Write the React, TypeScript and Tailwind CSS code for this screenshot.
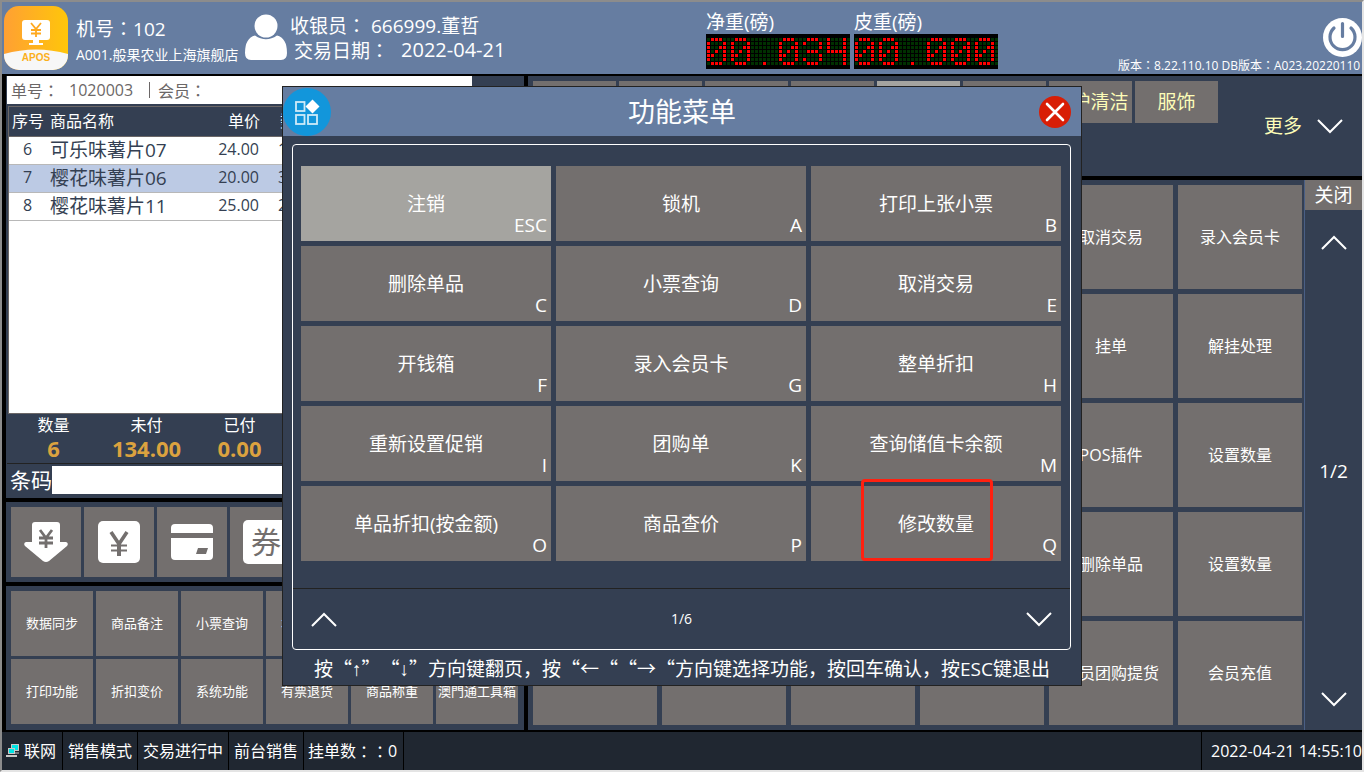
import type { ReactNode } from 'react'

const tabs = ['', '', '', '', '', '', '洗护清洁', '服饰']

const rows = [
    { no: 6, name: '可乐味薯片07', price: '24.00', qty: '1' },
    { no: 7, name: '樱花味薯片06', price: '20.00', qty: '3' },
    { no: 8, name: '樱花味薯片11', price: '25.00', qty: '2' },
]

const totals = [
    { label: '数量', value: '6' },
    { label: '未付', value: '134.00' },
    { label: '已付', value: '0.00' },
]

const shortcuts = [
    '数据同步', '商品备注', '小票查询', '本机设置', '', '',
    '打印功能', '折扣变价', '系统功能', '有票退货', '商品称重', '澳門通工具箱',
]

const functionRows = [
    ['取消交易', '录入会员卡'],
    ['挂单', '解挂处理'],
    ['POS插件', '设置数量'],
    ['删除单品', '设置数量'],
    ['会员团购提货', '会员充值'],
]

const menuItems = [
    { label: '注销', hotkey: 'ESC' },
    { label: '锁机', hotkey: 'A' },
    { label: '打印上张小票', hotkey: 'B' },
    { label: '删除单品', hotkey: 'C' },
    { label: '小票查询', hotkey: 'D' },
    { label: '取消交易', hotkey: 'E' },
    { label: '开钱箱', hotkey: 'F' },
    { label: '录入会员卡', hotkey: 'G' },
    { label: '整单折扣', hotkey: 'H' },
    { label: '重新设置促销', hotkey: 'I' },
    { label: '团购单', hotkey: 'K' },
    { label: '查询储值卡余额', hotkey: 'M' },
    { label: '单品折扣(按金额)', hotkey: 'O' },
    { label: '商品查价', hotkey: 'P' },
    { label: '修改数量', hotkey: 'Q' },
]

// 5x7 dot patterns for the scale readout
const glyphs: Record<string, string[]> = {
    '0': ['.XXX.', 'X...X', 'X..XX', 'X.X.X', 'XX..X', 'X...X', '.XXX.'],
    '3': ['.XXX.', 'X...X', '....X', '.XXX.', '....X', 'X...X', '.XXX.'],
    '4': ['X...X', 'X...X', 'X...X', 'XXXXX', '....X', '....X', '....X'],
    '.': ['.....', '.....', '.....', '.....', '.....', '.....', '..X..'],
}

function LedDisplay({ value }: { value: string }) {
    const dots = []
    for (let row = 0; row < 7; row++) {
        for (let col = 0; col < 36; col++) {
            const lit = glyphs[value[Math.floor(col / 6)]]?.[row][col % 6] === 'X'
            dots.push(
                <rect key={`${row}-${col}`} x={1 + col * 4} y={4 + row * 4} width="3" height="3" fill={lit ? '#ff0000' : '#003000'} />
            )
        }
    }
    return (
        <svg width="144" height="35" viewBox="0 0 144 35" shapeRendering="crispEdges" role="img" aria-label={value}>
            <rect width="144" height="35" fill="#000" />
            {dots}
        </svg>
    )
}

// Traditional Chinese fonts centre the full-width colon in its cell
function Colon() {
    return <span lang="zh-TW" className="font-['Noto_Sans_CJK_TC',sans-serif]">：</span>
}

function Chevron({ up = false }: { up?: boolean }) {
    return (
        <svg width="26" height="15" viewBox="0 0 26 15" fill="none" stroke="#fff" strokeWidth="2">
            <path d={up ? 'M1 14 13 2l12 12' : 'M1 1l12 12L25 1'} />
        </svg>
    )
}

function Logo() {
    return (
        <svg width="64" height="64" viewBox="0 0 64 64" className="shrink-0">
            <defs>
                <linearGradient id="logo-fill">
                    <stop offset="0" stopColor="#ffa033" />
                    <stop offset="1" stopColor="#ffc60a" />
                </linearGradient>
                <clipPath id="logo-clip">
                    <rect width="64" height="64" rx="15" />
                </clipPath>
            </defs>
            <g clipPath="url(#logo-clip)">
                <rect width="64" height="64" fill="url(#logo-fill)" />
                <path d="M0 48Q32 39 64 48V64H0Z" fill="#f7f7f7" />
            </g>
            <rect x="18" y="14" width="28" height="20" rx="3" fill="#fff" />
            <path d="M29 34h6v3h4v2H25v-2h4z" fill="#fff" />
            <path d="M27 17l5 6 5-6M27 24h10M27 27.500h10M32 23v8" fill="none" stroke="#ffa91f" strokeWidth="1.800" />
            <text x="32" y="55" textAnchor="middle" fontSize="10" fontWeight="700" fill="#fbb01c" fontFamily="Liberation Sans, sans-serif">APOS</text>
        </svg>
    )
}

function PersonIcon() {
    return (
        <svg width="42" height="46" viewBox="0 0 42 46" fill="#fff" className="shrink-0">
            <circle cx="21" cy="12" r="11.500" />
            <path d="M10 21.500Q21 29 32 21.500Q42 24 42 39Q42 46 36 46H6Q0 46 0 39Q0 24 10 21.500Z" />
        </svg>
    )
}

function PowerIcon() {
    return (
        <svg width="39" height="39" viewBox="0 0 39 39">
            <circle cx="19.500" cy="19.500" r="19.500" fill="#fff" />
            <path d="M11 10a12.500 12.500 0 1 0 17 0M19.500 5.500v13" fill="none" stroke="#667da1" strokeWidth="3.200" strokeLinecap="round" />
        </svg>
    )
}

function PayButton({ label, children }: { label: string; children: ReactNode }) {
    return (
        <button aria-label={label} className="flex size-[70px] shrink-0 items-center justify-center bg-[#736f6e]">
            <svg width="44" height="44" viewBox="0 0 44 44">{children}</svg>
        </button>
    )
}

function Header() {
    return (
        <header className="flex h-[74px] shrink-0 items-start border-b-2 border-black bg-[#667da1] text-white">
            <div className="flex pt-1 pl-0.5">
                <Logo />
            </div>
            <div className="w-[177px] shrink-0 pt-3 pl-2 whitespace-nowrap">
                <div className="text-[19px] leading-7">机号<Colon />102</div>
                <div className="text-sm leading-6">A001.般果农业上海旗舰店</div>
            </div>
            <div className="pt-3">
                <PersonIcon />
            </div>
            <div className="w-[419px] shrink-0 pt-[11px] pl-[3px] text-[19px] leading-6 whitespace-nowrap">
                <div>收银员<Colon /> 666999.董哲</div>
                <div className="flex gap-3 pl-1">
                    <span>交易日期<Colon /></span>
                    <span className="text-xl leading-6">2022-04-21</span>
                </div>
            </div>
            <div className="flex shrink-0 gap-1 pt-2 text-[19px] leading-6">
                <div className="flex flex-col">
                    净重(磅)
                    <LedDisplay value="00.034" />
                </div>
                <div className="flex flex-col">
                    皮重(磅)
                    <LedDisplay value="00.000" />
                </div>
            </div>
            <div className="ml-auto flex w-[244px] shrink-0 flex-col items-end overflow-hidden pt-4">
                <button aria-label="退出系统">
                    <PowerIcon />
                </button>
                <div className="w-full text-xs leading-4 whitespace-nowrap">版本<Colon />8.22.110.10 DB版本<Colon />A023.20220110</div>
            </div>
        </header>
    )
}

function OrderPanel() {
    return (
        <section className="flex flex-1 flex-col bg-[#343f52]">
            <div className="mr-[52px] ml-px flex h-7 items-center bg-white px-1 text-base text-[#6b6767]">
                <span>单号<Colon /></span>
                <span className="ml-2.5">1020003</span>
                <span className="ml-4 h-4 border-l border-[#6b6767]" />
                <span className="ml-2">会员<Colon /></span>
            </div>
            <div className="mt-0.5 mr-1 ml-0.5 flex-1 border border-[#6b6767] bg-white">
                <table className="w-full table-fixed text-left text-[#343f52]">
                    <thead className="h-[29px] border-b border-[#6b6767] bg-[#343f52] text-base text-white">
                        <tr>
                            <th className="w-[41px] pl-[3px] font-normal">序号</th>
                            <th className="w-[150px] font-normal">商品名称</th>
                            <th className="w-[60px] text-right font-normal">单价</th>
                            <th className="pl-5 font-normal">数量</th>
                        </tr>
                    </thead>
                    <tbody>
                        {rows.map((row) => (
                            <tr key={row.no} className={`h-7 border-b border-[#b8b8b8] ${row.no === 7 ? 'bg-[#bccae4]' : 'bg-white'}`}>
                                <td className="pr-1 text-center align-top text-base leading-6">{row.no}</td>
                                <td className="text-[19px] leading-5 whitespace-nowrap">{row.name}</td>
                                <td className="pr-px text-right align-top text-base leading-6">{row.price}</td>
                                <td className="pl-[18px] align-top text-base leading-6">{row.qty}</td>
                            </tr>
                        ))}
                    </tbody>
                </table>
            </div>
            <div className="ml-px flex h-[50px] items-start border-b border-[#222] text-center text-white">
                {totals.map((total) => (
                    <div key={total.label} className="w-[93px]">
                        <div className="text-base leading-[22px]">{total.label}</div>
                        <div className="text-[22px] leading-6 font-bold text-[#dba23f]">{total.value}</div>
                    </div>
                ))}
            </div>
            <div className="flex h-[34px] items-start px-1 pt-0.5">
                <label htmlFor="barcode" className="text-[21px] leading-7 text-white">条码</label>
                <input id="barcode" className="h-7 min-w-0 flex-1 bg-white px-1 outline-none" />
            </div>
        </section>
    )
}

function PayPanel() {
    return (
        <section className="flex h-20 gap-[3px] overflow-hidden bg-[#343f52] p-[5px]">
            <PayButton label="现金">
                <path d="M11 2h22q3 0 3 3v17h6q3 1 1 4L25 41q-3 2-6 0L1 26q-2-3 1-4h6V5q0-3 3-3z" fill="#fff" />
                <path d="M16 10l6 8 6-8M15 18h14M15 23h14M22 17v11" fill="none" stroke="#736f6e" strokeWidth="2.800" />
            </PayButton>
            <PayButton label="人民币">
                <rect x="1" y="1" width="42" height="42" rx="5" fill="#fff" />
                <path d="M14 12l8 12 8-12" fill="none" stroke="#736f6e" strokeWidth="3.600" />
                <path d="M14 25.500h16M14 30.500h16" stroke="#736f6e" strokeWidth="2" />
                <path d="M22 23v13" stroke="#736f6e" strokeWidth="4" />
            </PayButton>
            <PayButton label="银行卡">
                <path d="M5 4h34q4 0 4 4v5H1V8q0-4 4-4zM1 18h42v18q0 4-4 4H5q-4 0-4-4z" fill="#fff" />
                <path d="M28 28h10l-2 6H26z" fill="#736f6e" />
            </PayButton>
            <PayButton label="券">
                <rect x="0" y="0" width="44" height="44" rx="5" fill="#fff" />
                <text x="23" y="33" textAnchor="middle" fontSize="30" fill="#736f6e">券</text>
            </PayButton>
            <PayButton label="储值卡">
                <rect x="1" y="4" width="42" height="36" rx="5" fill="#fff" />
            </PayButton>
            <PayButton label="会员卡">
                <rect x="1" y="4" width="42" height="36" rx="5" fill="#fff" />
            </PayButton>
            <PayButton label="积分">
                <rect x="1" y="1" width="42" height="42" rx="21" fill="#fff" />
            </PayButton>
        </section>
    )
}

function CategoryPanel() {
    return (
        <section className="flex h-[100px] items-start justify-between overflow-hidden bg-[#343f52] p-[5px]">
            <div className="flex gap-[3px]">
                {tabs.map((tab, index) => (
                    <button
                        key={index}
                        className={`h-[42px] w-[83px] text-[19px] whitespace-nowrap text-[#fdfdb8] ${index === 4 ? 'bg-[#a5a4a0]' : 'bg-[#736f6e]'}`}
                    >
                        {tab}
                    </button>
                ))}
            </div>
            <button className="flex items-center gap-[15px] pt-[31px] pr-3.5 text-[19px] text-[#fdfdb8]">
                更多
                <Chevron />
            </button>
        </section>
    )
}

function FunctionPanel() {
    return (
        <section className="flex flex-1 bg-[#343f52]">
            <div className="grid flex-1 grid-cols-6 grid-rows-5 gap-[5px] py-[5px] pr-0.5 pl-[5px]">
                {functionRows.map((labels) =>
                    ['', '', '', '', ...labels].map((label, index) => (
                        <button key={index} className="flex items-center justify-center bg-[#736f6e] text-base whitespace-nowrap text-white">
                            {label}
                        </button>
                    ))
                )}
            </div>
            <div className="flex w-[58px] shrink-0 flex-col items-center border-l border-[#4a5f85] text-white">
                <button className="h-[30px] w-full bg-[#736f6e] text-[19px]">关闭</button>
                <button aria-label="上一页" className="flex h-16 items-center">
                    <Chevron up />
                </button>
                <div className="flex flex-1 items-center text-[19px]">1/2</div>
                <button aria-label="下一页" className="flex h-[62px] items-center">
                    <Chevron />
                </button>
            </div>
        </section>
    )
}

function StatusBar() {
    return (
        <footer className="flex h-10 shrink-0 items-stretch border-t-2 border-black bg-[#202731] text-base whitespace-nowrap text-white">
            <div className="flex items-center gap-1 border-r border-black pr-1.5 pl-1">
                <svg width="14" height="14" viewBox="0 0 14 14" stroke="#c8c8c8">
                    <rect x="5.500" y=".5" width="7" height="6" fill="#00e5e5" />
                    <path d="M5 9h8" />
                    <rect x="2.500" y="4.500" width="6" height="5" fill="#00e5e5" />
                    <path d="M0 12h11" strokeWidth="2" />
                </svg>
                联网
            </div>
            <div className="flex items-center border-r border-black px-[5px]">销售模式</div>
            <div className="flex items-center border-r border-black px-[5px]">交易进行中</div>
            <div className="flex items-center border-r border-black px-[5px]">前台销售</div>
            <div className="flex items-center border-r border-black pr-1.5 pl-1">
                挂单数<Colon /><Colon />0
            </div>
            <div className="ml-auto flex w-[161px] items-center overflow-hidden border-l border-black pl-[9px]">2022-04-21 14:55:10</div>
        </footer>
    )
}

function FunctionMenu() {
    return (
        <div className="fixed inset-0 flex items-center justify-center">
            <div role="dialog" aria-label="功能菜单" className="flex w-[800px] flex-col border border-[#222] bg-[#343f52] text-white">
                <div className="flex h-[49px] items-center bg-[#667da1] pr-2.5">
                    <svg width="48" height="48" viewBox="0 0 48 48">
                        <circle cx="24" cy="24" r="24" fill="#1296db" />
                        <g fill="none" stroke="#cfeaf8" strokeWidth="1.800">
                            <rect x="13" y="14" width="8.500" height="9" />
                            <rect x="13" y="27" width="8.500" height="9" />
                            <rect x="25" y="27" width="9" height="9" />
                        </g>
                        <path d="M29.500 11.500l7 7-7 7-7-7z" fill="#fff" />
                    </svg>
                    <h1 className="flex-1 pr-1.5 text-center text-[27px] leading-9">功能菜单</h1>
                    <button aria-label="关闭菜单">
                        <svg width="32" height="32" viewBox="0 0 32 32">
                            <circle cx="16" cy="16" r="16" fill="#d81e06" />
                            <path d="M8 8l16 16M24 8L8 24" stroke="#fff" strokeWidth="2.600" strokeLinecap="round" />
                        </svg>
                    </button>
                </div>
                <div className="mr-2.5 ml-[9px] mt-2 flex flex-col rounded border border-white">
                    <div className="grid grid-cols-3 gap-[5px] pt-[21px] pr-[9px] pb-[27px] pl-2">
                        {menuItems.map((item, index) => (
                            <button
                                key={item.hotkey}
                                className={`relative flex h-[75px] items-center justify-center pt-0.5 text-[19px] ${index === 0 ? 'bg-[#a5a4a0]' : 'bg-[#736f6e]'}`}
                            >
                                {item.label}
                                <span className="absolute right-1 bottom-0.5 leading-7">{item.hotkey}</span>
                                {item.hotkey === 'Q' && (
                                    <span className="absolute -top-[7px] left-[50px] h-[82px] w-[132px] rounded-sm border-3 border-[#ff2010]" />
                                )}
                            </button>
                        ))}
                    </div>
                    <div className="flex h-[61px] items-center justify-between border-t border-[#222] px-[18px]">
                        <button aria-label="上一页">
                            <Chevron up />
                        </button>
                        <span className="text-sm">1/6</span>
                        <button aria-label="下一页">
                            <Chevron />
                        </button>
                    </div>
                </div>
                <p className="h-[35px] text-center font-['Noto_Sans_CJK_SC',sans-serif] text-[19px] leading-9 whitespace-nowrap">
                    按“<span className="font-['Liberation_Sans']">↑</span>”“<span className="font-['Liberation_Sans']">↓</span>”方向键翻页，按“←““→“方向键选择功能，按回车确认，按
                    <span className="font-['Open_Sans']">ESC</span>键退出
                </p>
            </div>
        </div>
    )
}

export default function App() {
    return (
        <div
            lang="zh-CN"
            className="flex min-h-screen flex-col overflow-hidden border-2 border-t-[#8c8c8c] border-r-[#e4e4e4] border-b-[#e4e4e4] border-l-[#8c8c8c] bg-black font-['Open_Sans','Noto_Sans_CJK_SC',sans-serif] [text-spacing-trim:space-all]"
        >
            <Header />
            <main className="flex flex-1 gap-1 pl-1">
                <div className="flex w-[518px] shrink-0 flex-col gap-1">
                    <OrderPanel />
                    <PayPanel />
                    <section className="grid h-36 grid-cols-6 grid-rows-2 gap-[3px] bg-[#343f52] pt-[5px] pr-1.5 pb-1.5 pl-[5px]">
                        {shortcuts.map((label, index) => (
                            <button key={index} className="flex items-center justify-center bg-[#736f6e] text-[13px] whitespace-nowrap text-white">
                                {label}
                            </button>
                        ))}
                    </section>
                </div>
                <div className="flex min-w-0 flex-1 flex-col gap-1">
                    <CategoryPanel />
                    <FunctionPanel />
                </div>
            </main>
            <StatusBar />
            <FunctionMenu />
        </div>
    )
}
